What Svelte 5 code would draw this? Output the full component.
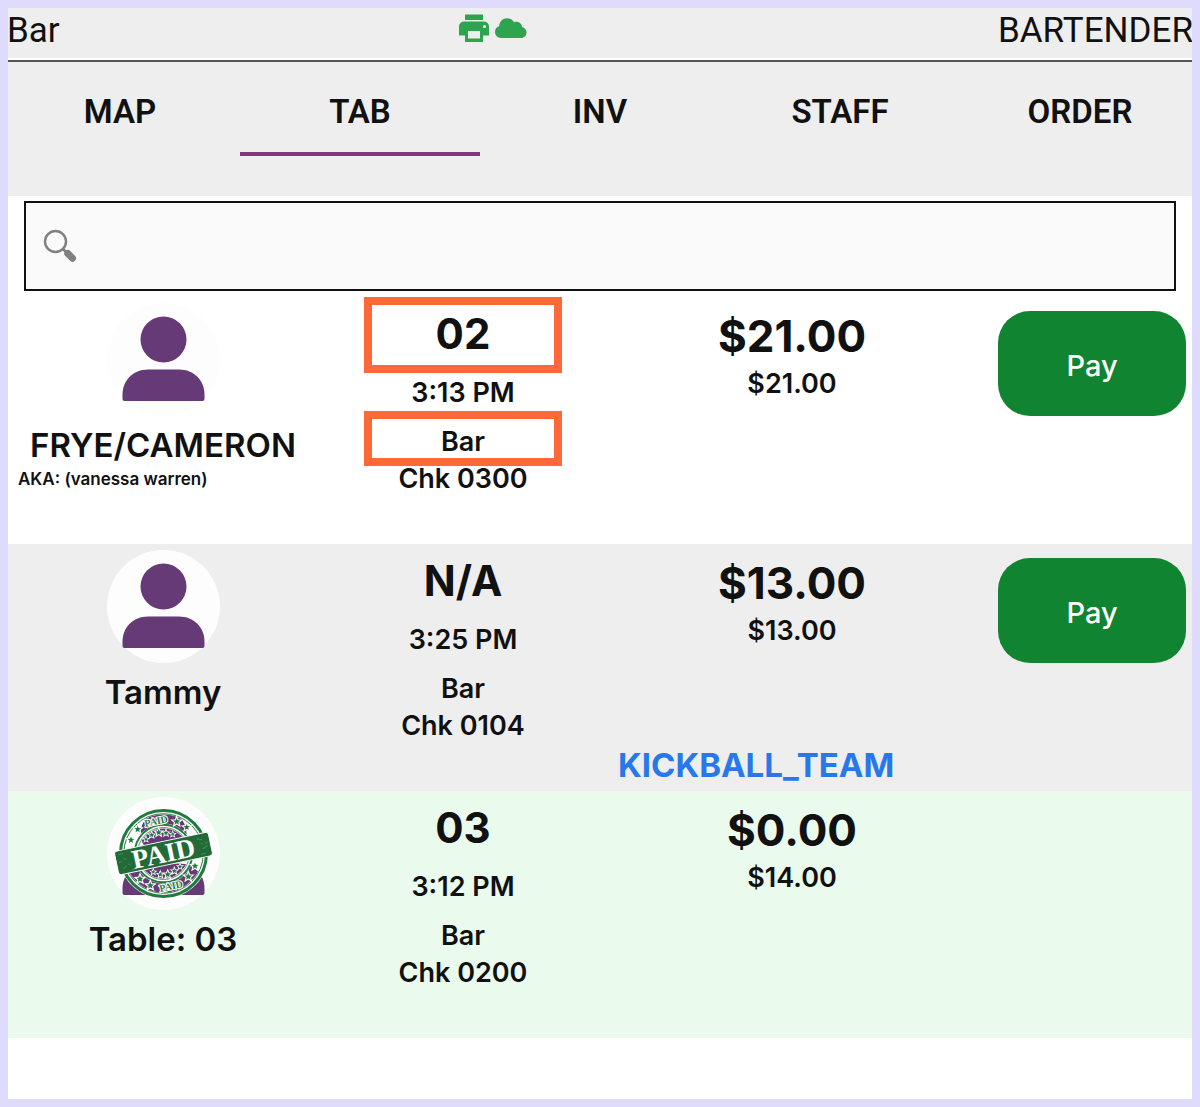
<script lang="ts">
    // Open tabs screen: status bar, section nav, search and one row per check.

    type Check = {
        id: string;
        name: string;
        aka?: string;
        seat: string;
        time: string;
        area: string;
        total: string;
        subtotal: string;
        group?: string;
        paid?: boolean;
        flagged?: boolean;
    };

    const sections = ['MAP', 'TAB', 'INV', 'STAFF', 'ORDER'];

    const checks: Check[] = [
        { id: '0300', name: 'FRYE/CAMERON', aka: 'vanessa warren', seat: '02', time: '3:13 PM', area: 'Bar', total: '$21.00', subtotal: '$21.00', flagged: true },
        { id: '0104', name: 'Tammy', seat: 'N/A', time: '3:25 PM', area: 'Bar', total: '$13.00', subtotal: '$13.00', group: 'KICKBALL_TEAM' },
        { id: '0200', name: 'Table: 03', seat: '03', time: '3:12 PM', area: 'Bar', total: '$0.00', subtotal: '$14.00', paid: true }
    ];

    // [x, y, radius] inside the stamp: outer ring first, then the inner arcs
    const stars = [
        [30.7, 32.3, 3.6], [24, 43, 3.6], [69.7, 24.7, 3.8], [79.7, 30.3, 3.4],
        [33, 82, 3.8], [88, 69, 3.6], [81.3, 79.7, 3.8], [43.3, 88.5, 3.8],
        [39, 42.3, 2.4], [44.7, 38, 2.8], [51.7, 35.5, 3.4], [59, 36, 2.8], [65.7, 37.3, 2.4],
        [46.3, 75, 2.4], [53.3, 77.5, 2.8], [60.7, 77.5, 3.4], [67.3, 74, 2.8], [73, 69.7, 2.4]
    ];

    let current = $state('TAB');
    let query = $state('');

    let visible = $derived(
        checks.filter((c) => `${c.name} ${c.aka ?? ''} ${c.id}`.toLowerCase().includes(query.toLowerCase()))
    );
</script>

<div class="screen">
    <header class="status">
        <span class="place">Bar</span>
        <span class="devices">
            <svg class="printer" viewBox="0 0 30 28" aria-label="Printer online" role="img">
                <path fill="#2da44e" d="M6 0.5h18v5.5H6zM5 7.5h20a5 5 0 0 1 5 5v9h-6V28H6v-6.500H0v-9a5 5 0 0 1 5-5z" />
                <path fill="#eee" d="M9 17h12v7.500H9z" />
                <circle cx="25.500" cy="12.500" r="1.500" fill="#eee" />
            </svg>
            <svg class="cloud" viewBox="0 0 32 20" aria-label="Cloud connected" role="img">
                <path fill="#2da44e" d="M6.500 20C2.500 20 0 17.200 0 14c0-2.900 1.600-5 4.200-5.700C4.300 3.600 7.600 0.300 12 0.300c3.200 0 5.700 1.500 7.100 3.900 4-1.500 7.600 0.800 7.900 4.800 2.800 0.800 4.500 2.800 4.500 5.500 0 3.200-2.300 5.500-5.500 5.500z" />
            </svg>
        </span>
        <span class="user">BARTENDER</span>
    </header>

    <nav class="sections">
        {#each sections as section}
            <a
                href="#{section.toLowerCase()}"
                class:active={current === section}
                onclick={() => (current = section)}
            >{section}</a>
        {/each}
    </nav>

    <label class="search">
        <svg viewBox="0 0 34 34" aria-hidden="true">
            <circle cx="12.500" cy="12.500" r="10.500" fill="none" stroke="#808080" stroke-width="2.400" />
            <path d="M20 20l3 3" stroke="#808080" stroke-width="2.500" />
            <path d="M24.800 24.500l4.700 4.700" stroke="#808080" stroke-width="7" stroke-linecap="round" />
        </svg>
        <input type="text" aria-label="Search tabs" bind:value={query} />
    </label>

    <ul class="checks">
        {#each visible as check (check.id)}
            <li class="check" class:paid={check.paid} class:flagged={check.flagged}>
                <div class="guest">
                    <svg class="avatar" viewBox="0 0 113 113" aria-hidden="true">
                        <circle cx="56.500" cy="56.500" r="56.500" fill="#fdfdfd" />
                        <g fill="#663977">
                            <circle cx="56.500" cy="36.500" r="23" />
                            <path d="M41 66.500h31c15 0 25.500 11 25.500 25v4.500q0 2-2 2h-78q-2 0-2-2v-4.500c0-14 10.500-25 25.500-25z" />
                        </g>
                        {#if check.paid}
                            <g fill="none" stroke="#fff">
                                <circle cx="56.500" cy="56.500" r="42" stroke-width="6" />
                                <circle cx="56.500" cy="56.500" r="27.500" stroke-width="5" />
                            </g>
                            <g fill="none" stroke="#237a3f">
                                <circle cx="56.500" cy="56.500" r="43" stroke-width="3" />
                                <circle cx="56.500" cy="56.500" r="39.800" stroke-width="1" />
                                <circle cx="56.500" cy="56.500" r="28.800" stroke-width="2" />
                                <circle cx="56.500" cy="56.500" r="26" stroke-width="0.800" />
                            </g>
                            <g class="ink">
                                {#each stars as [x, y, r]}
                                    <path
                                        transform="translate({x} {y}) scale({r})"
                                        stroke-width="0.600"
                                        d="M0-1L.26-.36.95-.31.42.14.59.81 0 .44-.59.81-.42.14-.95-.31-.26-.36z"
                                    />
                                {/each}
                            </g>
                            <g class="ink word" stroke-width="2">
                                <text x="49" y="27.500" transform="rotate(-12 49 24)">PAID</text>
                                <text x="64" y="92.500" transform="rotate(-12 64 89)">PAID</text>
                            </g>
                            <g transform="rotate(-12 56.500 56.500)">
                                <rect x="8.500" y="44.500" width="96" height="24" rx="3" fill="#226a38" stroke="#fff" stroke-width="1" />
                                <path d="M12 48h5M14 63l4-2M22 66h3M11 56h3M16 53l3 2M20 60h2M92 49l5 2M96 60l5-2M93 65h5M99 55h3M95 54l2 1" stroke="#3f8d58" stroke-width="1" />
                                <text class="band" x="56.500" y="65.500">PAID</text>
                            </g>
                        {/if}
                    </svg>
                    <strong class="name">{check.name}</strong>
                    {#if check.aka}
                        <span class="aka">AKA: ({check.aka})</span>
                    {/if}
                </div>

                <div class="details">
                    <strong class="seat">{check.seat}</strong>
                    <span class="time">{check.time}</span>
                    <span class="area">{check.area}</span>
                    <span class="number">Chk {check.id}</span>
                </div>

                <div class="amounts">
                    <strong class="total">{check.total}</strong>
                    <span class="subtotal">{check.subtotal}</span>
                    {#if check.group}
                        <a class="group" href="#group">{check.group}</a>
                    {/if}
                </div>

                {#if !check.paid}
                    <button class="pay" type="button">Pay</button>
                {/if}
            </li>
        {/each}
    </ul>
</div>

<style>
    :global(body) {
        margin: 0;
        background: #fff;
    }

    .screen {
        min-height: 100vh;
        overflow: hidden;
        box-sizing: border-box;
        padding-top: 8px;
        font-family: Inter, 'Liberation Sans', sans-serif;
        color: #111;
    }
    /* device frame, drawn over the content so it clips the edges */
    .screen::after {
        content: '';
        position: fixed;
        inset: 0;
        border: 8px solid #dfdbfd;
        pointer-events: none;
    }

    /* ---------- status bar ---------- */
    .status {
        display: grid;
        grid-template-columns: 451fr 538fr auto;
        align-items: start;
        height: 50px;
        padding-left: 7px;
        background: #eee;
        font-family: Roboto, sans-serif;
        font-size: 35px;
        line-height: 46px;
    }
    .devices {
        display: flex;
        align-items: center;
        gap: 6px;
        padding-top: 6px;
    }
    .printer { width: 30px; height: 28px; }
    .cloud { width: 32px; height: 20px; }
    .user { padding-right: 7px; }

    /* ---------- sections ---------- */
    .sections {
        display: grid;
        grid-template-columns: repeat(5, 1fr);
        margin-top: 2px;
        padding-bottom: 40px;
        border-top: 2px solid #555;
        background: #eee;
    }
    .sections a {
        padding: 28px 0 18px;
        border-bottom: 4px solid transparent;
        color: #111;
        font-family: Roboto, sans-serif;
        font-size: 33px;
        font-weight: 600;
        line-height: 44px;
        text-align: center;
        text-decoration: none;
    }
    .sections a.active { border-color: #863576; }

    /* ---------- search ---------- */
    .search {
        display: flex;
        align-items: center;
        gap: 12px;
        height: 86px;
        margin: 5px 24px 6px;
        padding: 0 17px;
        border: 2px solid #111;
        background: #fafafa;
    }
    .search svg { width: 34px; height: 34px; flex-shrink: 0; }
    .search input {
        flex: 1;
        min-width: 0;
        border: 0;
        outline: 0;
        background: transparent;
        font: inherit;
        font-size: 32px;
    }

    /* ---------- checks ---------- */
    .checks {
        margin: 0;
        padding: 0;
        list-style: none;
    }
    .check {
        display: grid;
        grid-template-columns: 290fr 310fr 348fr 220fr;
        min-height: 247px;
        padding: 0 14px 0 18px;
        box-sizing: border-box;
        font-size: 27px;
        font-weight: 600;
    }
    .check:nth-child(even) { background: #eee; }
    .check.paid { background: #eafaed; }
    strong { font-weight: 600; }

    .guest {
        display: flex;
        flex-direction: column;
        align-items: center;
        padding-top: 6px;
    }
    .avatar { width: 113px; height: 113px; }
    .ink {
        fill: #237a3f;
        stroke: #fff;
        paint-order: stroke;
    }
    .word, .band {
        font-family: 'Liberation Serif', serif;
        font-weight: 700;
        text-anchor: middle;
    }
    .word { font-size: 10px; }
    .band {
        fill: #fff;
        font-size: 27px;
    }
    .name {
        margin-top: 7px;
        font-size: 33px;
        line-height: 44px;
    }
    .aka {
        align-self: flex-start;
        font-size: 17px;
        line-height: 24px;
    }

    .details {
        display: flex;
        flex-direction: column;
        align-items: center;
    }
    .seat, .area {
        width: 198px;
        border: 8px solid transparent;
        box-sizing: border-box;
        text-align: center;
    }
    .flagged .seat, .flagged .area { border-color: #ff6838; }
    .seat {
        height: 76px;
        font-size: 42px;
        font-weight: 700;
        line-height: 58px;
    }
    .time {
        height: 38px;
        line-height: 40px;
    }
    .area {
        height: 55px;
        line-height: 46px;
    }
    .number { line-height: 26px; }

    .amounts {
        display: flex;
        flex-direction: column;
        align-items: center;
        padding-top: 12px;
    }
    .total {
        font-size: 44px;
        font-weight: 700;
        line-height: 54px;
    }
    .subtotal { line-height: 42px; }
    .group {
        align-self: flex-start;
        margin-top: auto;
        padding-bottom: 4px;
        color: #2878ec;
        font-size: 33px;
        font-weight: 700;
        line-height: 44px;
        text-decoration: none;
    }

    .pay {
        justify-self: end;
        width: 188px;
        height: 105px;
        margin-top: 14px;
        padding: 4px 0 0;
        border: 0;
        border-radius: 32px;
        background: #118432;
        color: #fff;
        font: 500 29px/40px Inter, sans-serif;
        cursor: pointer;
    }
</style>
